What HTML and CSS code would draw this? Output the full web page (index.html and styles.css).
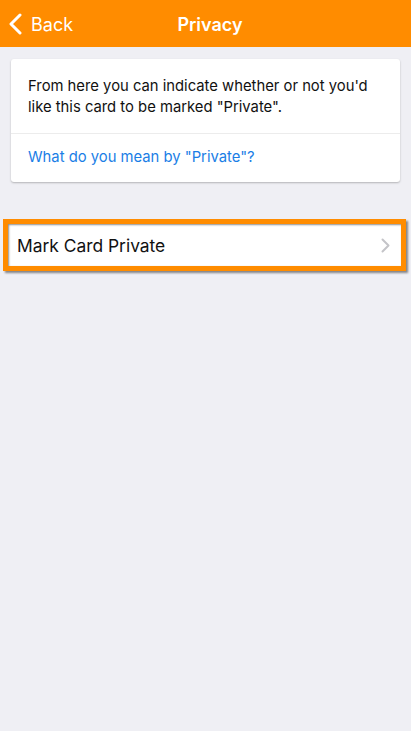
FILE: index.html
```html
<!DOCTYPE html>
<html lang="en">
<head>
  <meta charset="UTF-8" />
  <meta name="viewport" content="width=device-width,initial-scale=1.0">
  <title>Privacy</title>
  <link rel="stylesheet" href="styles.css">
</head>
<body>
  <div class="header">
    <div class="back">
      <svg class="back-icon" width="13" height="22" viewBox="0 0 13 22">
        <path d="M11 2 L2 11 L11 20" fill="none" stroke="#fff" stroke-width="3" stroke-linecap="round" stroke-linejoin="round"/>
      </svg>
      <span>Back</span>
    </div>
    <div class="title">Privacy</div>
    <div class="spacer"></div>
  </div>

  <div class="content">
    <div class="card">
      <p class="card-text">From here you can indicate whether or not you'd like this card to be marked "Private".</p>
      <div class="card-link">What do you mean by "Private"?</div>
    </div>

    <div class="highlight">
      <div class="row">
        <span>Mark Card Private</span>
        <svg class="chevron" width="9" height="15" viewBox="0 0 9 15">
          <path d="M1.5 1.5 L7.5 7.5 L1.5 13.5" fill="none" stroke="#c4c4c8" stroke-width="2" stroke-linecap="round" stroke-linejoin="round"/>
        </svg>
      </div>
    </div>
  </div>
</body>
</html>
```

FILE: styles.css
```css
html, body {
  margin: 0;
  padding: 0;
  height: 100%;
  background-color: #efeff4;
  font-family: Inter, "Noto Sans", sans-serif;
}

.header {
  height: 47px;
  background-color: #ff8c00;
  display: flex;
  align-items: center;
  color: #fff;
  padding-top: 1px;
  box-sizing: border-box;
}

.back {
  flex: 1;
  display: flex;
  align-items: center;
  gap: 9px;
  padding-left: 9px;
  font-size: 18px;
}

.title {
  font-size: 18px;
  font-weight: 600;
}

.spacer {
  flex: 1;
}

.content {
  padding-top: 12px;
}

.card {
  margin: 0 11px;
  background: #fff;
  border-radius: 3px;
  box-shadow: 0 1px 2px rgba(0,0,0,0.25);
}

.card-text {
  margin: 0;
  padding: 17px 17px 15px;
  font-size: 14.8px;
  line-height: 21px;
  color: #111;
  border-bottom: 1px solid #ececec;
}

.card-link {
  padding: 14px 17px 16px;
  font-size: 14.8px;
  color: #1a7ee6;
}

.highlight {
  margin: 37px 5px 0 3px;
  border: 5px solid #ff8c00;
  box-shadow: 2px 2px 2px rgba(0,0,0,0.45), inset 1px 1px 2px rgba(0,0,0,0.45);
  background: #fff;
}

.row {
  height: 42px;
  display: flex;
  align-items: center;
  justify-content: space-between;
  padding: 0 9px 0 9px;
  font-size: 17.4px;
  color: #111;
}

.chevron {
  margin-right: 2px;
}
```
